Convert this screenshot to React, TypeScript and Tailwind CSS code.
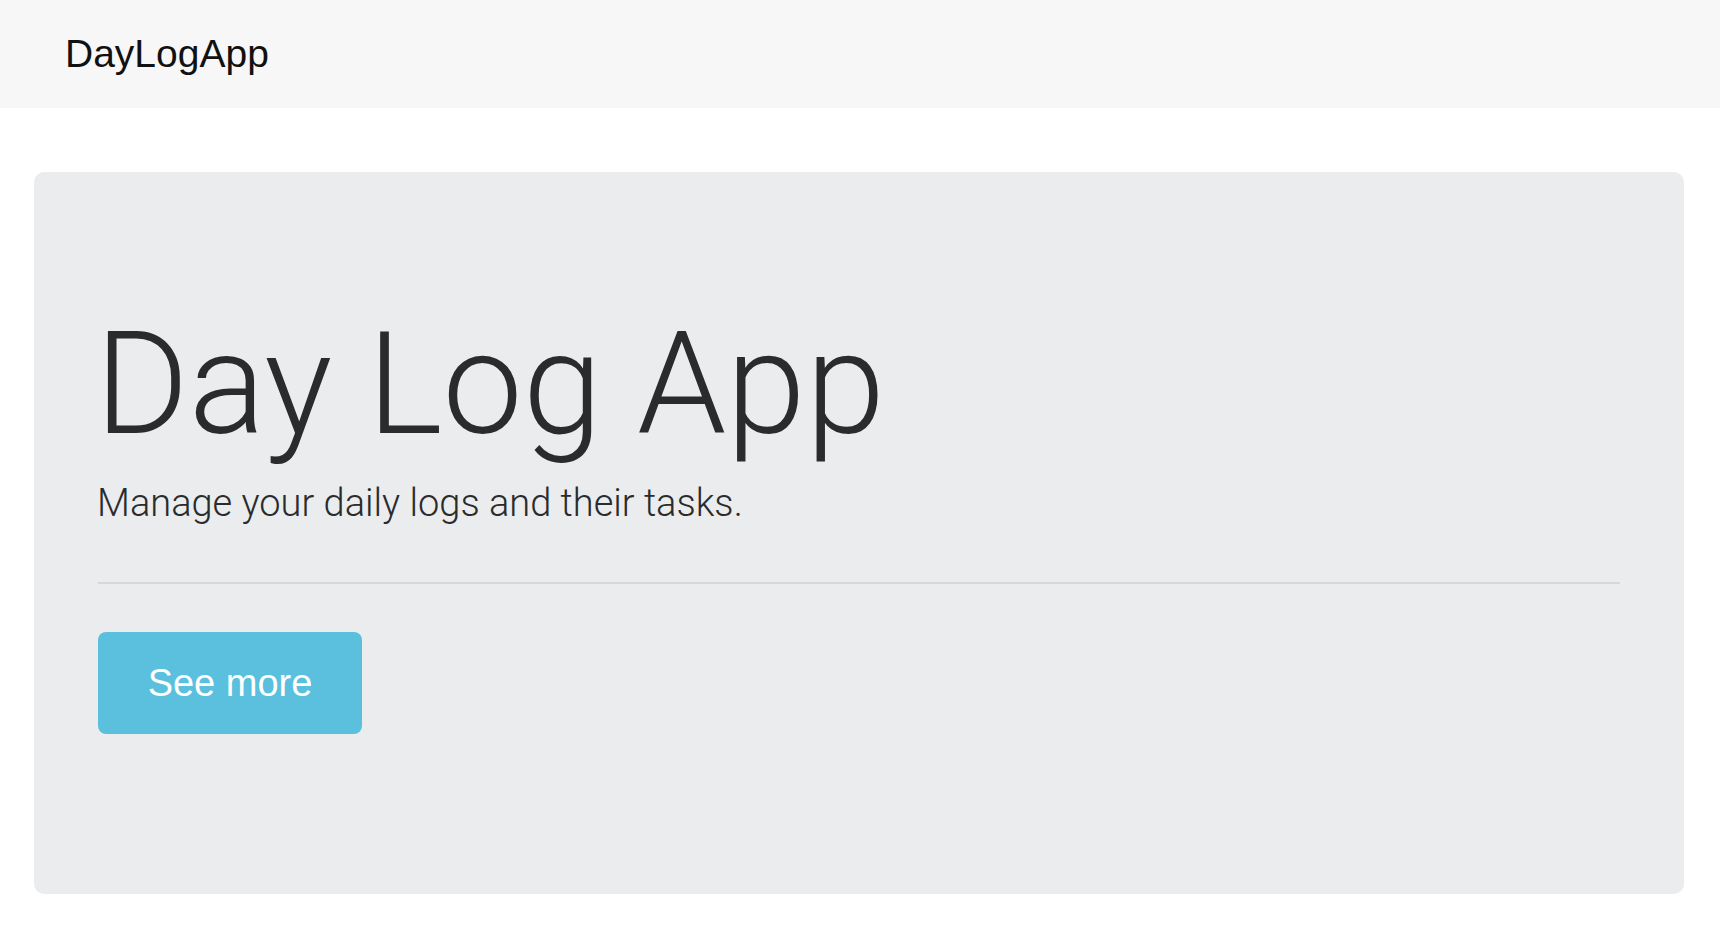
export default function App() {
  return (
    <div className="min-h-screen bg-white text-[#292b2c]" style={{ fontFamily: "Roboto, 'Liberation Sans', sans-serif" }}>
      <nav className="h-[108px] bg-[#f7f7f7] flex items-center px-[65px]">
        <a className="text-[39px] leading-none text-[#111] font-['Liberation_Sans',sans-serif] -mt-[2px]">DayLogApp</a>
      </nav>

      <main className="px-[34px] pt-[64px] pr-[36px]">
        <section className="bg-[#ebecee] rounded-[10px] pt-[128px] pb-[160px] px-[64px]">
          <h1 className="text-[143px] leading-[168px] font-light -ml-[3px] mb-[7px]">Day Log App</h1>
          <p className="text-[38px] leading-[1.5] font-light -ml-[1px]">Manage your daily logs and their tasks.</p>
          <hr className="border-0 h-[2px] bg-[#d6d7d9] mt-[50px] mb-[48px]" />
          <button className="h-[102px] w-[264px] rounded-[8px] bg-[#5bc0de] text-white text-[38px] font-['Liberation_Sans',sans-serif]">
            See more
          </button>
        </section>
      </main>
    </div>
  )
}
